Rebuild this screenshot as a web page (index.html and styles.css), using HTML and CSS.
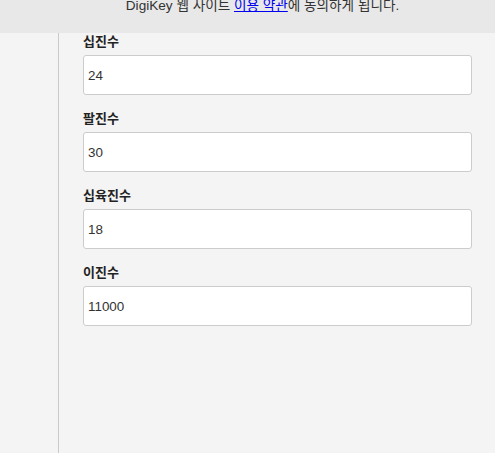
FILE: index.html
```html
<!DOCTYPE html>
<html lang="ko">
<head>
<meta charset="utf-8">
<link rel="stylesheet" href="styles.css">
</head>
<body>
<div class="notice">
  <p class="notice-text">DigiKey 웹 사이트 <a href="#" class="notice-link">이용 약관</a>에 동의하게 됩니다.</p>
</div>
<div class="main">
  <aside class="sidebar"></aside>
  <section class="content">
    <div class="field">
      <label class="field-label">십진수</label>
      <input class="field-input" type="text" value="24">
    </div>
    <div class="field">
      <label class="field-label">팔진수</label>
      <input class="field-input" type="text" value="30">
    </div>
    <div class="field">
      <label class="field-label">십육진수</label>
      <input class="field-input" type="text" value="18">
    </div>
    <div class="field">
      <label class="field-label">이진수</label>
      <input class="field-input" type="text" value="11000">
    </div>
  </section>
</div>
</body>
</html>
```
FILE: styles.css
```css
html, body {
  margin: 0;
  padding: 0;
  height: 100%;
}
body {
  font-family: "Liberation Sans", "Noto Sans CJK KR", Arial, sans-serif;
  background: #f4f4f4;
  color: #333;
  display: flex;
  flex-direction: column;
}
.notice {
  background: #e8e8e8;
  height: 33px;
  flex: none;
  overflow: hidden;
}
.notice-text {
  margin: -1px 0 0;
  padding-left: 30px;
  text-align: center;
  font-size: 13.6px;
  line-height: 14px;
  color: #333;
}
.notice-link {
  color: #0000ee;
  text-decoration: underline;
}
.main {
  flex: 1;
  display: flex;
}
.sidebar {
  width: 58px;
  border-right: 1px solid #cacaca;
  flex: none;
}
.content {
  flex: 1;
  padding: 1px 23px 0 24px;
}
.field {
  display: flex;
  flex-direction: column;
  margin-bottom: 16px;
}
.field-label {
  font-size: 13px;
  font-weight: bold;
  line-height: 16px;
  color: #222;
  margin-bottom: 5px;
}
.field-input {
  box-sizing: border-box;
  height: 40px;
  border: 1px solid #cccccc;
  border-radius: 3px;
  background: #fff;
  padding: 0 4px;
  font-family: "Liberation Sans", "Noto Sans CJK KR", Arial, sans-serif;
  font-size: 13.4px;
  color: #333;
  outline: none;
}
```
